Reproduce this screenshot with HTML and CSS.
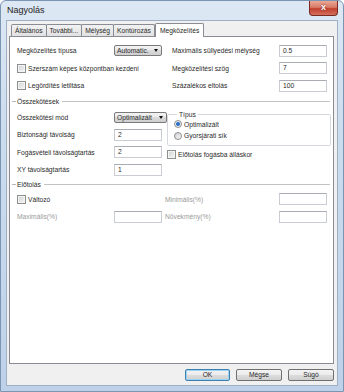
FILE: index.html
```html
<!DOCTYPE html>
<html lang="hu">
<head>
    <meta charset="UTF-8">
    <meta name="viewport" content="width=device-width, initial-scale=1.0">
    <title>Nagyolás</title>
    <link rel="stylesheet" href="styles.css">
</head>
<body>
    <div class="window">
        <div class="titlebar">
            <span class="title">Nagyolás</span>
            <div class="close">x</div>
        </div>

        <div class="client">
            <div class="tabs">
                <div class="tab">Általános</div>
                <div class="tab">További...</div>
                <div class="tab">Mélység</div>
                <div class="tab">Kontúrozás</div>
                <div class="tab active">Megközelítés</div>
            </div>

            <div class="panel">
                <div class="grid top">
                    <span>Megközelítés típusa</span>
                    <div class="combo">Automatic.</div>
                    <span>Maximális süllyedési mélység</span>
                    <div class="field">0.5</div>

                    <label class="check span2"><i class="box"></i>Szerszám képes központban kezdeni</label>
                    <span>Megközelítési szög</span>
                    <div class="field">7</div>

                    <label class="check span2"><i class="box"></i>Legördítés letiltása</label>
                    <span>Százalékos eltolás</span>
                    <div class="field">100</div>
                </div>

                <div class="group-head first">Összekötések</div>

                <div class="grid links">
                    <span>Összekötési mód</span>
                    <div class="combo wide">Optimalizált</div>
                    <fieldset class="type-box">
                        <legend>Típus</legend>
                        <label class="radio"><i class="dot on"></i>Optimalizált</label>
                        <label class="radio"><i class="dot"></i>Gyorsjárati sík</label>
                    </fieldset>

                    <span>Biztonsági távolság</span>
                    <div class="field">2</div>

                    <span>Fogásvételi távolságtartás</span>
                    <div class="field">2</div>
                    <label class="check low"><i class="box"></i>Előtolás fogásba álláskor</label>

                    <span>XY távolságtartás</span>
                    <div class="field">1</div>
                </div>

                <div class="group-head second">Előtolás</div>

                <div class="grid feed">
                    <label class="check span2"><i class="box"></i>Változó</label>
                    <span class="muted">Minimális(%)</span>
                    <div class="field"></div>

                    <span class="muted">Maximális(%)</span>
                    <div class="field"></div>
                    <span class="muted">Növekmény(%)</span>
                    <div class="field"></div>
                </div>
            </div>

            <div class="buttons">
                <button class="btn default">OK</button>
                <button class="btn">Mégse</button>
                <button class="btn">Súgó</button>
            </div>
        </div>
    </div>
</body>
</html>
```

FILE: styles.css
```css
body {
    margin: 0;
    font-family: "Liberation Sans", Arial, sans-serif;
    font-size: 6.7px;
    color: #2a2a2a;
}
.window {
    width: 344px;
    height: 392px;
    box-sizing: border-box;
    border: 1px solid #7b94b2;
    border-radius: 6px 6px 0 0;
    background: linear-gradient(180deg, #dde8f4 0%, #cbdcee 35%, #bdd2e9 100%);
    padding: 0 5px 5px;
    display: flex;
    flex-direction: column;
}
.titlebar {
    height: 19px;
    flex: none;
    display: flex;
    justify-content: space-between;
    align-items: flex-start;
}
.title {
    font-size: 9px;
    line-height: 19px;
    padding-left: 1px;
    color: #222;
}
.close {
    width: 29px;
    height: 15px;
    box-sizing: border-box;
    border: 1px solid #7a2a22;
    border-top: none;
    border-radius: 0 0 4px 4px;
    background: linear-gradient(180deg, #e9a895 0%, #d97a68 45%, #c2402f 55%, #d3705d 100%);
    color: #fff;
    font-weight: bold;
    font-size: 9px;
    line-height: 13px;
    text-align: center;
    text-shadow: 0 0 2px #5a1a12;
}
.client {
    flex: 1;
    box-sizing: border-box;
    border: 1px solid #9fb0c4;
    background: #f0f0f0;
    display: flex;
    flex-direction: column;
}
.tabs {
    height: 15px;
    flex: none;
    display: flex;
    align-items: flex-end;
    padding-left: 4px;
}
.tab {
    height: 12px;
    box-sizing: border-box;
    padding: 0 3px;
    margin-right: -1px;
    border: 1px solid #898c95;
    border-bottom: none;
    border-radius: 2px 2px 0 0;
    background: linear-gradient(180deg, #f2f2f2, #e1e1e1);
    line-height: 11px;
}
.tab.active {
    height: 14px;
    margin-bottom: -1px;
    margin-left: 1px;
    padding: 0 4px;
    background: #fff;
    position: relative;
    line-height: 13px;
}
.panel {
    height: 328px;
    flex: none;
    box-sizing: border-box;
    margin: 0 3px 0 2px;
    border: 1px solid #898c95;
    background: #fff;
    padding: 5px 0 0 7px;
}
.grid {
    display: grid;
    grid-auto-rows: 17.5px;
    align-items: center;
}
.top {
    grid-template-columns: 97px 58px 107px 48px;
}
.links {
    grid-template-columns: 97px 53px 164px;
}
.feed {
    grid-template-columns: 97px 51px 114px 48px;
}
.span2 {
    grid-column: span 2;
}
.muted {
    color: #9a9a9a;
}
.field {
    width: 48px;
    height: 12px;
    box-sizing: border-box;
    border: 1px solid #c9ccd2;
    border-top-color: #a9acb3;
    background: #fff;
    padding-left: 3px;
    line-height: 10px;
}
.combo {
    width: 48px;
    height: 11px;
    box-sizing: border-box;
    border: 1px solid #7a7a7a;
    border-radius: 2px;
    background: linear-gradient(180deg, #f3f3f3 0%, #e9e9e9 50%, #dadada 50%, #cfcfcf 100%);
    padding-left: 2px;
    line-height: 9px;
    display: flex;
    justify-content: space-between;
    align-items: center;
    overflow: hidden;
    white-space: nowrap;
}
.combo::after {
    content: "";
    flex: none;
    margin: 0 3px 0 1px;
    border-left: 2.5px solid transparent;
    border-right: 2.5px solid transparent;
    border-top: 3px solid #111;
}
.combo.wide {
    width: 53px;
}
.check, .radio {
    display: flex;
    align-items: center;
    white-space: nowrap;
}
.box {
    width: 9px;
    height: 9px;
    flex: none;
    box-sizing: border-box;
    border: 1px solid #8e8f8f;
    background: linear-gradient(135deg, #cfd1d4, #f6f6f6);
    box-shadow: inset 0 0 0 1px #f4f4f4;
    margin-right: 2px;
}
.dot {
    width: 8px;
    height: 8px;
    flex: none;
    box-sizing: border-box;
    border: 1px solid #8e8f8f;
    border-radius: 50%;
    background: linear-gradient(135deg, #cfd1d4, #f8f8f8);
    margin-right: 2px;
}
.dot.on {
    background: radial-gradient(circle, #2c67bd 0, #3a78cc 1.6px, #f2f2f2 2.4px, #d6d8db 100%);
}
.type-box {
    grid-row: span 2;
    align-self: start;
    margin: 2px 0 0;
    padding: 0 0 3px 6px;
    border: 1px solid #d5d9de;
    border-radius: 2px;
}
.type-box legend {
    padding: 0 2px;
    margin-left: 3px;
    line-height: 8px;
}
.radio {
    height: 11.5px;
}
.low {
    margin-top: 4px;
}
.group-head {
    display: flex;
    align-items: center;
    margin: 0 3px 0 -5px;
    white-space: nowrap;
}
.group-head::before {
    content: "";
    width: 4px;
    height: 1px;
    background: #b7b7b7;
    margin-right: 1px;
}
.group-head::after {
    content: "";
    flex: 1;
    height: 1px;
    background: #c3c3c3;
    margin-left: 3px;
}
.group-head.first {
    height: 14px;
}
.group-head.second {
    height: 12px;
}
.buttons {
    display: flex;
    justify-content: flex-end;
    gap: 6px;
    margin-top: 5px;
    padding-right: 3px;
}
.btn {
    height: 12px;
    width: 46px;
    box-sizing: border-box;
    border: 1px solid #707070;
    border-radius: 2px;
    background: linear-gradient(180deg, #f3f3f3 0%, #ebebeb 50%, #dddddd 50%, #cfcfcf 100%);
    font-family: inherit;
    font-size: 6.7px;
    color: #2a2a2a;
    padding: 0;
    line-height: 10px;
}
.btn.default {
    width: 45px;
    border-color: #3c7fb1;
    box-shadow: inset 0 0 0 1px #9fd2f1;
}
```
